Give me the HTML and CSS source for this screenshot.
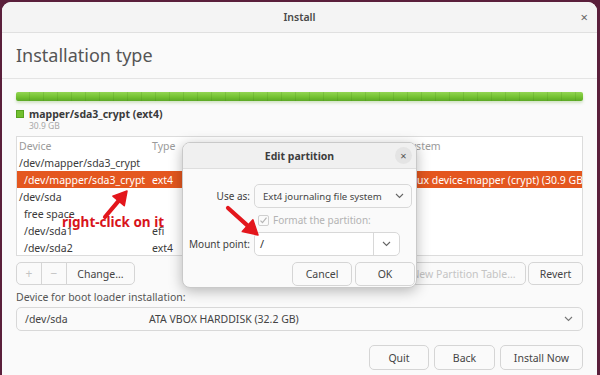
FILE: index.html
```html
<!DOCTYPE html>
<html>
<head>
<meta charset="utf-8">
<link rel="stylesheet" href="styles.css">
</head>
<body>
<div class="window">
  <header class="titlebar">
    <span></span>
    <span class="title">Install</span>
    <span class="close">×</span>
  </header>
  <div class="page-head"><h1>Installation type</h1></div>
  <main class="content">
    <div class="diskbar"></div>
    <div class="legend">
      <span class="swatch"></span>
      <div class="legend-text">
        <div class="legend-name">mapper/sda3_crypt (ext4)</div>
        <div class="legend-size">30.9 GB</div>
      </div>
    </div>
    <div class="table">
      <div class="row head"><span>Device</span><span>Type</span><span>System</span></div>
      <div class="row"><span>/dev/mapper/sda3_crypt</span><span></span><span></span></div>
      <div class="row sel"><span class="child">/dev/mapper/sda3_crypt</span><span>ext4</span><span>linux device-mapper (crypt) (30.9 GB)</span></div>
      <div class="row"><span>/dev/sda</span><span></span><span></span></div>
      <div class="row"><span class="child">free space</span><span></span><span></span></div>
      <div class="row"><span class="child">/dev/sda1</span><span>efi</span><span></span></div>
      <div class="row"><span class="child">/dev/sda2</span><span>ext4</span><span></span></div>
    </div>
    <div class="toolbar">
      <div class="btn-group">
        <button class="btn sq dim">+</button>
        <button class="btn sq dim">−</button>
        <button class="btn change">Change...</button>
      </div>
      <div class="tools-right">
        <button class="btn dim newtable">New Partition Table...</button>
        <button class="btn revert">Revert</button>
      </div>
    </div>
    <div class="boot-label">Device for boot loader installation:</div>
    <div class="combo wide">
      <span class="c-dev">/dev/sda</span>
      <span class="c-desc">ATA VBOX HARDDISK (32.2 GB)</span>
      <svg class="chev" width="9" height="6" viewBox="0 0 9 6"><path d="M1 1l3.5 3.5L8 1" fill="none" stroke="#777" stroke-width="1.1"/></svg>
    </div>
    <div class="actions">
      <button class="btn act quit">Quit</button>
      <button class="btn act back">Back</button>
      <button class="btn act install">Install Now</button>
    </div>
  </main>
</div>

<div class="dialog">
  <div class="d-title">
    <span></span>
    <span class="d-name">Edit partition</span>
    <span class="d-close">×</span>
  </div>
  <div class="d-body">
    <label class="d-label">Use as:</label>
    <div class="combo d-combo">
      <span>Ext4 journaling file system</span>
      <svg class="chev" width="9" height="6" viewBox="0 0 9 6"><path d="M1 1l3.5 3.5L8 1" fill="none" stroke="#666" stroke-width="1.1"/></svg>
    </div>
    <span></span>
    <div class="check-row">
      <span class="checkbox"><svg width="9" height="9" viewBox="0 0 9 9"><path d="M1.5 4.7l2 2 4-5" fill="none" stroke="#b5b5b5" stroke-width="1.2"/></svg></span>
      <span class="check-text">Format the partition:</span>
    </div>
    <label class="d-label">Mount point:</label>
    <div class="entry">
      <span class="entry-text">/</span>
      <span class="entry-drop"><svg width="9" height="6" viewBox="0 0 9 6"><path d="M1 1l3.5 3.5L8 1" fill="none" stroke="#666" stroke-width="1.1"/></svg></span>
    </div>
    <div class="d-buttons">
      <button class="btn d-btn">Cancel</button>
      <button class="btn d-btn">OK</button>
    </div>
  </div>
</div>

<div class="note">right-click on it</div>
<svg class="arrows" width="600" height="375" viewBox="0 0 600 375">
  <g fill="#e3161c" stroke="#e3161c">
    <line x1="105" y1="217" x2="118.6" y2="200.9" stroke-width="4.2" stroke-linecap="round"/>
    <polygon points="127,191 124.3,205.7 112.9,196.1" stroke-width="1.5" stroke-linejoin="round"/>
    <line x1="228" y1="208" x2="247.6" y2="225.6" stroke-width="4.2" stroke-linecap="round"/>
    <polygon points="258,235 242.3,231.6 252.9,219.7" stroke-width="1.5" stroke-linejoin="round"/>
  </g>
</svg>
</body>
</html>
```

FILE: styles.css
```css
* { box-sizing: border-box; }
html, body { margin: 0; height: 100%; }
body {
  background: #5a1f3b;
  font-family: "Noto Sans", "DejaVu Sans", sans-serif;
  color: #3c3c3c;
  overflow: hidden;
}
button { font-family: inherit; }

.window {
  margin: 2px 3px 0 2px;
  height: 373px;
  background: #fafafa;
  border-radius: 9px 9px 0 0;
  overflow: hidden;
}

.titlebar {
  height: 31px;
  display: grid;
  grid-template-columns: 1fr auto 1fr;
  align-items: center;
  background: #f4f4f4;
  border-bottom: 1px solid #e0e0e0;
}
.title { font-size: 10.5px; font-weight: 600; color: #4a4a4a; }
.close { justify-self: end; padding-right: 9px; font-size: 13px; color: #666; }

.page-head {
  height: 46px;
  padding-left: 14px;
  border-bottom: 1px solid #e4e4e4;
}
.page-head h1 {
  margin: 0;
  font-size: 18px;
  font-weight: 400;
  line-height: 45px;
  color: #555;
}

.content { padding: 13px 14px 0; }

.diskbar {
  height: 9px;
  border-radius: 2px;
  background:
    repeating-linear-gradient(90deg, transparent 0 13px, rgba(60,120,20,.18) 13px 14px),
    linear-gradient(#93d553, #74c231 55%, #5ca826);
  box-shadow: 0 2px 3px rgba(90,160,40,.25);
}

.legend { display: flex; gap: 5px; margin-top: 7px; }
.swatch {
  width: 8px; height: 8px; margin-top: 2px;
  background: #72c02f; border: 1px solid #56a21f;
}
.legend-text { display: flex; flex-direction: column; }
.legend-name { font-size: 10.5px; font-weight: 700; color: #3a3a3a; line-height: 13px; }
.legend-size { font-size: 8.5px; color: #a8a8a8; line-height: 10px; }

.table {
  margin-top: 5px;
  height: 120px;
  background: #fff;
  border: 1px solid #dcdcdc;
  overflow: hidden;
}
.row {
  display: grid;
  grid-template-columns: 133px 253px 1fr;
  height: 17px;
  align-items: center;
  font-size: 10.5px;
  color: #3a3a3a;
  white-space: nowrap;
}
.row span { padding-left: 2px; overflow: hidden; }
.row.head { color: #9a9a9a; }
.row .child { padding-left: 7px; }
.row.sel { background: #e4571f; color: #fff; }

.toolbar {
  margin-top: 6px;
  display: flex;
  justify-content: space-between;
}
.btn {
  height: 23px;
  border: 1px solid #d5d5d5;
  border-radius: 5px;
  background: #fafafa;
  font-size: 10.5px;
  color: #454545;
  padding: 0 8px;
  white-space: nowrap;
}
.btn-group { display: flex; }
.btn-group .btn { border-radius: 0; margin-left: -1px; }
.btn-group .btn:first-child { border-radius: 5px 0 0 5px; margin-left: 0; }
.btn-group .btn:last-child { border-radius: 0 5px 5px 0; }
.btn.sq { width: 26px; padding: 0; font-size: 12px; }
.btn.change { width: 69px; }
.dim { color: #c4c4c4; }
.tools-right { display: flex; gap: 2px; }
.newtable { width: 125px; }
.revert { width: 55px; }

.boot-label {
  margin-top: 5px;
  font-size: 10.5px;
  line-height: 14px;
  color: #555;
}

.combo {
  display: flex;
  align-items: center;
  border: 1px solid #d8d8d8;
  border-radius: 5px;
  background: #fafafa;
  font-size: 10.5px;
  color: #444;
  white-space: nowrap;
}
.combo.wide { margin-top: 3px; height: 24px; padding: 0 9px 0 8px; }
.c-dev { width: 124px; }
.c-desc { flex: 1; }
.chev { flex: none; }

.actions {
  margin-top: 14px;
  display: flex;
  justify-content: flex-end;
  gap: 5px;
}
.btn.act { height: 25px; }
.quit { width: 60px; }
.back { width: 61px; }
.install { width: 83px; }

/* dialog overlay */
.dialog {
  position: absolute;
  left: 182px;
  top: 142px;
  width: 235px;
  height: 146px;
  background: #fafafa;
  border: 1px solid #c9c9c9;
  border-radius: 8px;
  box-shadow: 0 3px 14px rgba(0,0,0,.28);
  overflow: hidden;
}
.d-title {
  height: 26px;
  display: grid;
  grid-template-columns: 1fr auto 1fr;
  align-items: center;
  background: #f0f0f0;
  border-bottom: 1px solid #dedede;
}
.d-name { font-size: 10.5px; font-weight: 700; color: #3d3d3d; }
.d-close {
  justify-self: end;
  margin-right: 4px;
  width: 17px; height: 17px;
  border-radius: 50%;
  background: #e4e4e4;
  display: flex; align-items: center; justify-content: center;
  font-size: 11px; color: #555;
}
.d-body {
  display: grid;
  grid-template-columns: 63px 1fr;
  column-gap: 4px;
  row-gap: 7px;
  padding: 15px 1px 0 4px;
  align-items: center;
}
.d-label { text-align: right; font-size: 10px; color: #3d3d3d; white-space: nowrap; }
.d-combo {
  height: 24px;
  width: 158px;
  padding: 0 7px 0 8px;
  justify-content: space-between;
  font-size: 9.6px;
}
.check-row { display: flex; align-items: center; gap: 4px; padding-left: 4px; height: 10px; }
.checkbox {
  width: 11px; height: 11px;
  border: 1px solid #cfcfcf;
  border-radius: 2px;
  display: flex; align-items: center; justify-content: center;
}
.check-text { font-size: 10px; color: #b3b3b3; white-space: nowrap; }
.entry {
  width: 146px;
  height: 24px;
  display: flex;
  border: 1px solid #d8d8d8;
  border-radius: 5px;
  background: #fff;
}
.entry-text { flex: 1; padding-left: 5px; font-size: 11px; line-height: 22px; color: #333; }
.entry-drop {
  width: 26px;
  border-left: 1px solid #d8d8d8;
  display: flex; align-items: center; justify-content: center;
}
.d-buttons {
  grid-column: 1 / -1;
  justify-self: end;
  display: flex;
  gap: 3px;
  margin-top: -1px;
}
.d-btn { width: 60px; height: 24px; }

.note {
  position: absolute;
  left: 62px;
  top: 213px;
  font-size: 13.5px;
  font-weight: 700;
  color: #d8141b;
  white-space: nowrap;
}
.arrows { position: absolute; left: 0; top: 0; pointer-events: none; }
```
